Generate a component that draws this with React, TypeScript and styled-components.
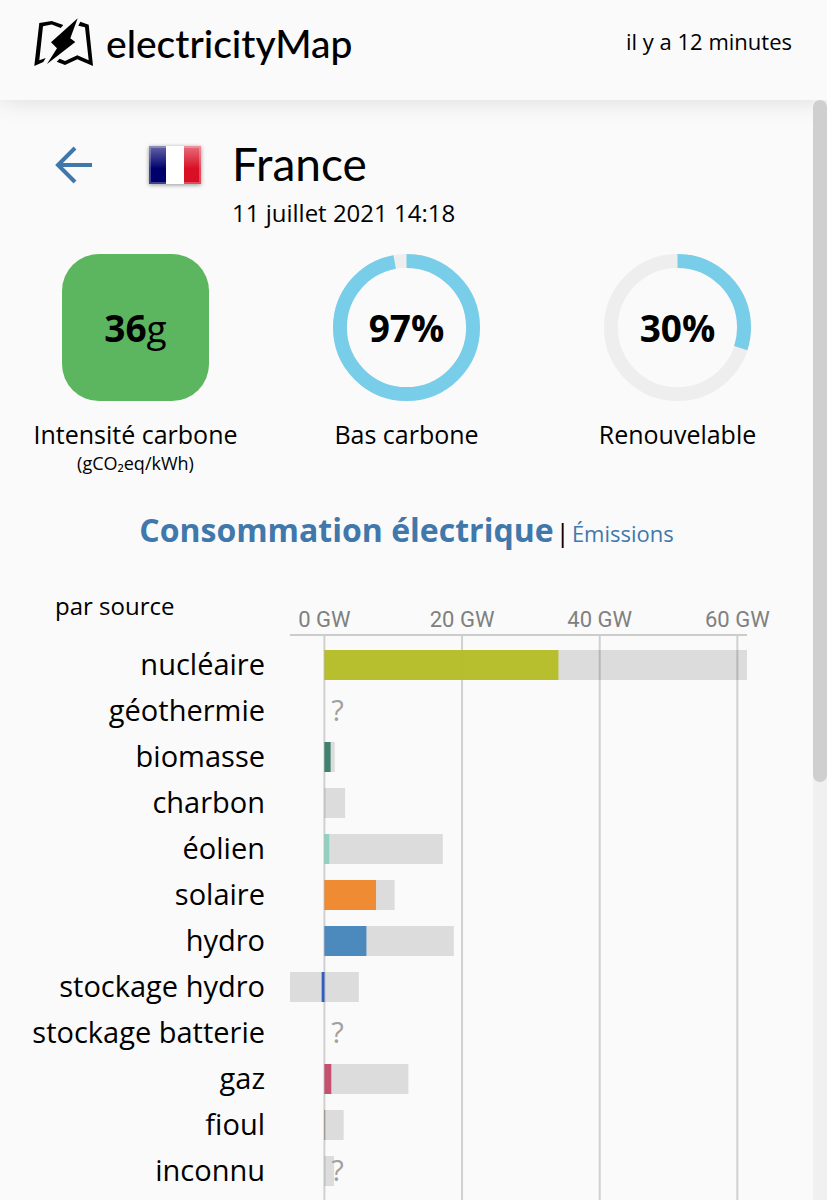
import React from 'react'
import styled, { createGlobalStyle } from 'styled-components'

interface Source {
  name: string
  color?: string
  value?: number
  min?: number
  max?: number
  unknown?: boolean
}

const sources: Source[] = [
  { name: 'nucléaire', color: '#b4bd24', value: 34, max: 61.4 },
  { name: 'géothermie', unknown: true },
  { name: 'biomasse', color: '#387b69', value: 0.9, max: 1.5 },
  { name: 'charbon', max: 3 },
  { name: 'éolien', color: '#8bd0bd', value: 0.7, max: 17.2 },
  { name: 'solaire', color: '#ef8628', value: 7.5, max: 10.2 },
  { name: 'hydro', color: '#4384b9', value: 6.1, max: 18.8 },
  { name: 'stockage hydro', color: '#2459c2', value: -0.4, min: -5, max: 5 },
  { name: 'stockage batterie', unknown: true },
  { name: 'gaz', color: '#c34969', value: 1, max: 12.2 },
  { name: 'fioul', color: '#8a7a6a', value: 0.1, max: 2.8 },
  { name: 'inconnu', max: 1.4, unknown: true }
]

const ticks = [0, 20, 40, 60]
const domain = [-5, 61.4]
const rowHeight = 46
const barHeight = 30
const axisHeight = 46

// GW -> % of the plot width
const size = (gw: number) => `${(gw / (domain[1] - domain[0])) * 100}%`
const pos = (gw: number) => size(gw - domain[0])

const Logo = () => (
  <svg width="60" height="50" viewBox="0 0 60 50" aria-hidden="true">
    <path d="M5.3 5L17.7 3L29.3 7L26.7 10L17.7 6.6L9 8.3L5.3 42.3L11.7 40L9.3 44L.3 48Z" />
    <path d="M46.3 3.7L54.7 6.7L59 48L43.3 41.3L31 47L22.7 43.7L25.7 40.7L31 43L43.3 37.3L54.7 42.3L51 9.3L44.3 7.7Z" />
    <path d="M43.7 .3L36.3 20.3L41.3 24L13 46L23 30.3L17 24.3Z" />
  </svg>
)

const Flag = () => (
  <FlagSvg width="52" height="38" viewBox="0 0 52 38" role="img" aria-label="France">
    <defs>
      <linearGradient id="gloss" x1="0" y1="0" x2="0" y2="1">
        <stop offset="0" stopColor="#fff" stopOpacity="0.4" />
        <stop offset="0.6" stopColor="#fff" stopOpacity="0" />
      </linearGradient>
    </defs>
    <rect width="17" height="38" fill="#00006d" />
    <rect x="17" width="18" height="38" fill="#fff" />
    <rect x="35" width="17" height="38" fill="#d80f25" />
    <rect width="52" height="38" fill="url(#gloss)" />
    <rect x="1" y="1" width="50" height="36" fill="none" stroke="#fff" strokeOpacity="0.25" strokeWidth="2" />
  </FlagSvg>
)

const Gauge = (props: { percent: number }) => {
  const length = 2 * Math.PI * 67
  return (
    <GaugeBox>
      <svg width="147" height="147" viewBox="0 0 148 148" aria-hidden="true">
        <g transform="rotate(-90 74 74)" fill="none" strokeWidth="14">
          <circle cx="74" cy="74" r="67" stroke="#eeeeee" />
          <circle
            cx="74"
            cy="74"
            r="67"
            stroke="#78cde8"
            strokeDasharray={`${(length * props.percent) / 100} ${length}`}
          />
        </g>
      </svg>
      <GaugeValue>{props.percent}%</GaugeValue>
    </GaugeBox>
  )
}

const Bars = () => (
  <Plot height={axisHeight + sources.length * rowHeight + 20} aria-label="Consommation par source">
    <rect x="0" y="38" width="100%" height="2" fill="#cccccc" />
    {ticks.map(tick => (
      <Tick key={tick} x={pos(tick)} y="31">{tick} GW</Tick>
    ))}
    {sources.map((source, i) => source.max && (
      <rect
        key={source.name}
        x={pos(source.min || 0)}
        y={axisHeight + i * rowHeight + 8}
        width={size(source.max - (source.min || 0))}
        height={barHeight}
        fill="#dcdcdc"
      />
    ))}
    {ticks.map(tick => (
      <line key={tick} x1={pos(tick)} x2={pos(tick)} y1="40" y2="100%" stroke="#000" strokeOpacity="0.17" strokeWidth="2" />
    ))}
    {sources.map((source, i) => {
      const y = axisHeight + i * rowHeight + 8
      const value = source.value || 0
      return (
        <g key={source.name}>
          {source.value && (
            <rect
              x={pos(Math.min(0, value))}
              y={y}
              width={size(Math.abs(value))}
              height={barHeight}
              fill={source.color}
              fillOpacity="0.95"
            />
          )}
          {source.unknown && <Unknown x={pos(1)} y={y + 25}>?</Unknown>}
        </g>
      )
    })}
  </Plot>
)

const App = () => (
  <Page>
    <GlobalStyle />
    <Header>
      <Brand href="#">
        <Logo />
        electricityMap
      </Brand>
      <Updated>il y a 12 minutes</Updated>
    </Header>
    <Body>
      <Panel>
        <Zone>
          <Back type="button" aria-label="Retour">
            <svg width="38" height="38" viewBox="0 0 38 38" fill="none" stroke="#4178ac" strokeWidth="4">
              <path d="M37 19H4M20 2L3 19L20 36" />
            </svg>
          </Back>
          <Flag />
          <ZoneText>
            <ZoneName>France</ZoneName>
            <ZoneDate>11 juillet 2021 14:18</ZoneDate>
          </ZoneText>
        </Zone>
        <Indicators>
          <Indicator>
            <Square><b>36</b>g</Square>
            <Caption>Intensité carbone</Caption>
            <Unit>(gCO₂eq/kWh)</Unit>
          </Indicator>
          <Indicator>
            <Gauge percent={97} />
            <Caption>Bas carbone</Caption>
          </Indicator>
          <Indicator>
            <Gauge percent={30} />
            <Caption>Renouvelable</Caption>
          </Indicator>
        </Indicators>
        <Tabs>
          <Tab href="#consommation" $active>Consommation électrique</Tab>
          <Divider>|</Divider>
          <Tab href="#emissions">Émissions</Tab>
        </Tabs>
        <Chart>
          <Labels>
            <BySource>par source</BySource>
            {sources.map(source => (
              <Label key={source.name}>{source.name}</Label>
            ))}
          </Labels>
          <Bars />
        </Chart>
      </Panel>
      <Track>
        <Thumb />
      </Track>
    </Body>
  </Page>
)

const GlobalStyle = createGlobalStyle`
  body {
    margin: 0;
    background: #fafafa;
    color: #000;
    font-family: 'Open Sans', sans-serif;
  }
`
const Page = styled.div`
  display: flex;
  flex-direction: column;
  height: 100vh;
  overflow: hidden;
`
const Header = styled.header`
  display: flex;
  flex: none;
  align-items: center;
  justify-content: space-between;
  height: 100px;
  padding: 0 35px 0 34px;
  box-sizing: border-box;
  box-shadow: 0 0 24px rgba(0, 0, 0, 0.13);
`
const Brand = styled.a`
  display: flex;
  align-items: center;
  gap: 12px;
  padding-bottom: 14px;
  color: #000;
  font-family: Lato, sans-serif;
  font-size: 39px;
  font-weight: 500;
  line-height: 48px;
  text-decoration: none;
`
const Updated = styled.span`
  padding-bottom: 18px;
  font-size: 22px;
  line-height: 32px;
`
const Body = styled.div`
  display: flex;
  flex: 1;
  min-height: 0;
`
const Panel = styled.main`
  flex: 1;
  min-width: 0;
  overflow: hidden;
`
const Zone = styled.section`
  display: flex;
  align-items: flex-start;
  padding: 36px 55px 0;
`
const Back = styled.button`
  display: flex;
  margin-top: 10px;
  padding: 0;
  border: 0;
  background: none;
  cursor: pointer;
`
const FlagSvg = styled.svg`
  margin: 10px 31px 0 56px;
  filter: drop-shadow(0 1px 2px rgba(0, 0, 0, 0.4));
`
const ZoneText = styled.div`
  display: flex;
  flex-direction: column;
`
const ZoneName = styled.h1`
  margin: 0;
  font-family: Lato, sans-serif;
  font-size: 46px;
  font-weight: 400;
  line-height: 56px;
`
const ZoneDate = styled.time`
  margin-top: 5px;
  font-size: 24px;
  line-height: 32px;
`
const Indicators = styled.section`
  display: grid;
  grid-template-columns: repeat(3, 1fr);
  margin-top: 25px;
`
const Indicator = styled.div`
  display: flex;
  flex-direction: column;
  align-items: center;
`
const Square = styled.div`
  display: flex;
  align-items: center;
  justify-content: center;
  width: 147px;
  height: 147px;
  border-radius: 37px;
  background: #5cb55f;
  font-size: 37px;
`
const GaugeBox = styled.div`
  display: grid;
  place-items: center;
  & > * {
    grid-area: 1 / 1;
  }
`
const GaugeValue = styled.span`
  font-size: 37px;
  font-weight: 700;
`
const Caption = styled.div`
  margin-top: 16px;
  font-size: 25px;
  line-height: 34px;
`
const Unit = styled.div`
  font-size: 18px;
  line-height: 24px;
`
const Tabs = styled.nav`
  display: flex;
  align-items: baseline;
  justify-content: center;
  margin-top: 31px;
  line-height: 48px;
`
const Tab = styled.a<{ $active?: boolean }>`
  color: #4178ac;
  font-size: ${props => (props.$active ? '32px' : '22px')};
  font-weight: ${props => (props.$active ? 700 : 400)};
  text-decoration: none;
`
const Divider = styled.span`
  padding: 0 2px;
  font-size: 26px;
`
const Chart = styled.section`
  display: flex;
  margin-top: 39px;
  padding-right: 66px;
`
const Labels = styled.div`
  flex: none;
  width: 265px;
  margin-right: 25px;
  text-align: right;
`
const BySource = styled.div`
  height: 45px;
  padding-left: 55px;
  font-size: 24px;
  line-height: 20px;
  text-align: left;
`
const Label = styled.div`
  font-size: 29px;
  line-height: 46px;
  white-space: nowrap;
`
const Plot = styled.svg`
  flex: 1;
  min-width: 0;
  overflow: visible;
`
const Tick = styled.text`
  fill: #808080;
  font-family: Roboto, sans-serif;
  font-size: 22px;
  text-anchor: middle;
`
const Unknown = styled.text`
  fill: #a0a0a0;
  font-size: 29px;
`
const Track = styled.div`
  flex: none;
  width: 14px;
  background: #f0f0f0;
`
const Thumb = styled.div`
  height: 62%;
  border-radius: 7px;
  background: #cfcfcf;
`

export default App
